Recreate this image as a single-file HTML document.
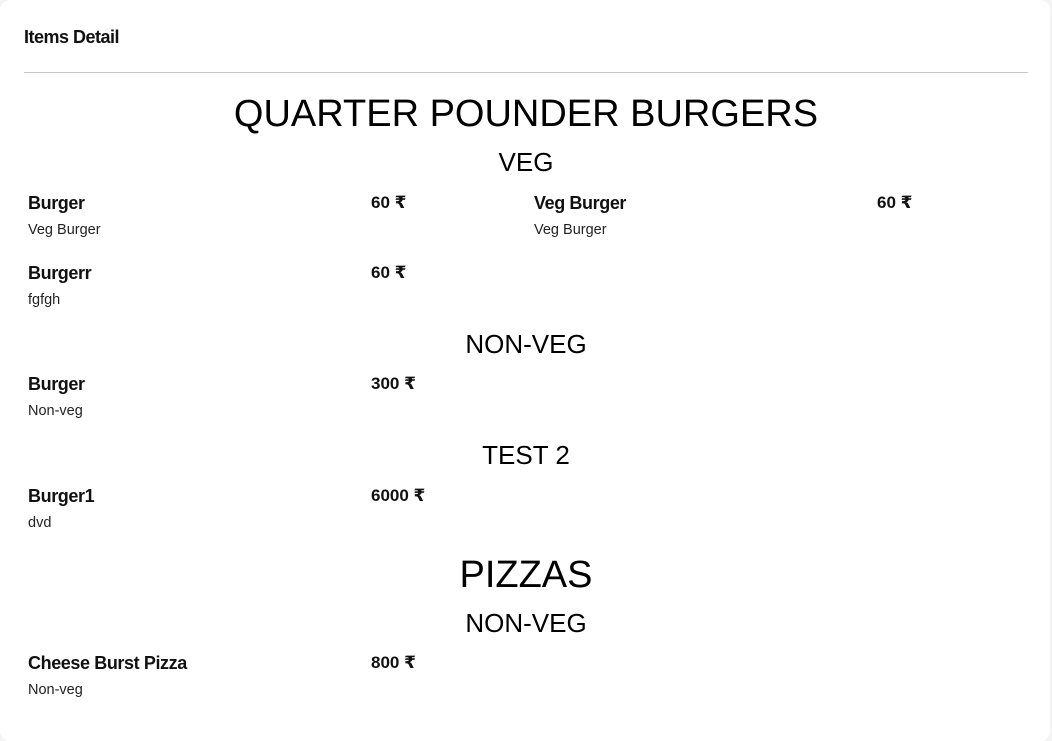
<!DOCTYPE html>
<html><head><meta charset="utf-8"><style>
html,body{margin:0;padding:0;background:#f4f4f4;}
body{width:1052px;height:741px;position:relative;overflow:hidden;font-family:"Liberation Sans","DejaVu Sans",sans-serif;color:#111;}
.card{position:absolute;left:0;top:0;width:1050px;height:741px;background:#fff;border-radius:10px;}
.a{position:absolute;white-space:nowrap;line-height:24px;}
.t{position:absolute;left:24px;top:27px;font-size:18px;font-weight:bold;letter-spacing:-0.5px;}
.hr{position:absolute;left:24px;top:72px;width:1004px;height:1px;background:#c8c8c8;}
.h1{position:absolute;left:0;width:1052px;text-align:center;font-size:38px;line-height:44px;color:#000;}
.h2{position:absolute;left:0;width:1052px;text-align:center;font-size:26px;line-height:30px;color:#000;}
.n{font-size:18px;font-weight:bold;letter-spacing:-0.4px;}
.d{font-size:14.5px;color:#222;}
.p{font-size:17px;font-weight:bold;}
</style></head><body><div class="card">
<div class="t">Items Detail</div>
<div class="hr"></div>
<div class="h1" style="top:92px">QUARTER POUNDER BURGERS</div>
<div class="h2" style="top:147px">VEG</div>
<div class="a n" style="left:28px;top:191px">Burger</div>
<div class="a d" style="left:28px;top:218px">Veg Burger</div>
<div class="a p" style="left:371px;top:191px">60 ₹</div>
<div class="a n" style="left:534px;top:191px">Veg Burger</div>
<div class="a d" style="left:534px;top:218px">Veg Burger</div>
<div class="a p" style="left:877px;top:191px">60 ₹</div>
<div class="a n" style="left:28px;top:261px">Burgerr</div>
<div class="a d" style="left:28px;top:288px">fgfgh</div>
<div class="a p" style="left:371px;top:261px">60 ₹</div>
<div class="h2" style="top:329px">NON-VEG</div>
<div class="a n" style="left:28px;top:372px">Burger</div>
<div class="a d" style="left:28px;top:399px">Non-veg</div>
<div class="a p" style="left:371px;top:372px">300 ₹</div>
<div class="h2" style="top:440px">TEST 2</div>
<div class="a n" style="left:28px;top:484px">Burger1</div>
<div class="a d" style="left:28px;top:511px">dvd</div>
<div class="a p" style="left:371px;top:484px">6000 ₹</div>
<div class="h1" style="top:553px">PIZZAS</div>
<div class="h2" style="top:608px">NON-VEG</div>
<div class="a n" style="left:28px;top:651px">Cheese Burst Pizza</div>
<div class="a d" style="left:28px;top:678px">Non-veg</div>
<div class="a p" style="left:371px;top:651px">800 ₹</div>
</div></body></html>
